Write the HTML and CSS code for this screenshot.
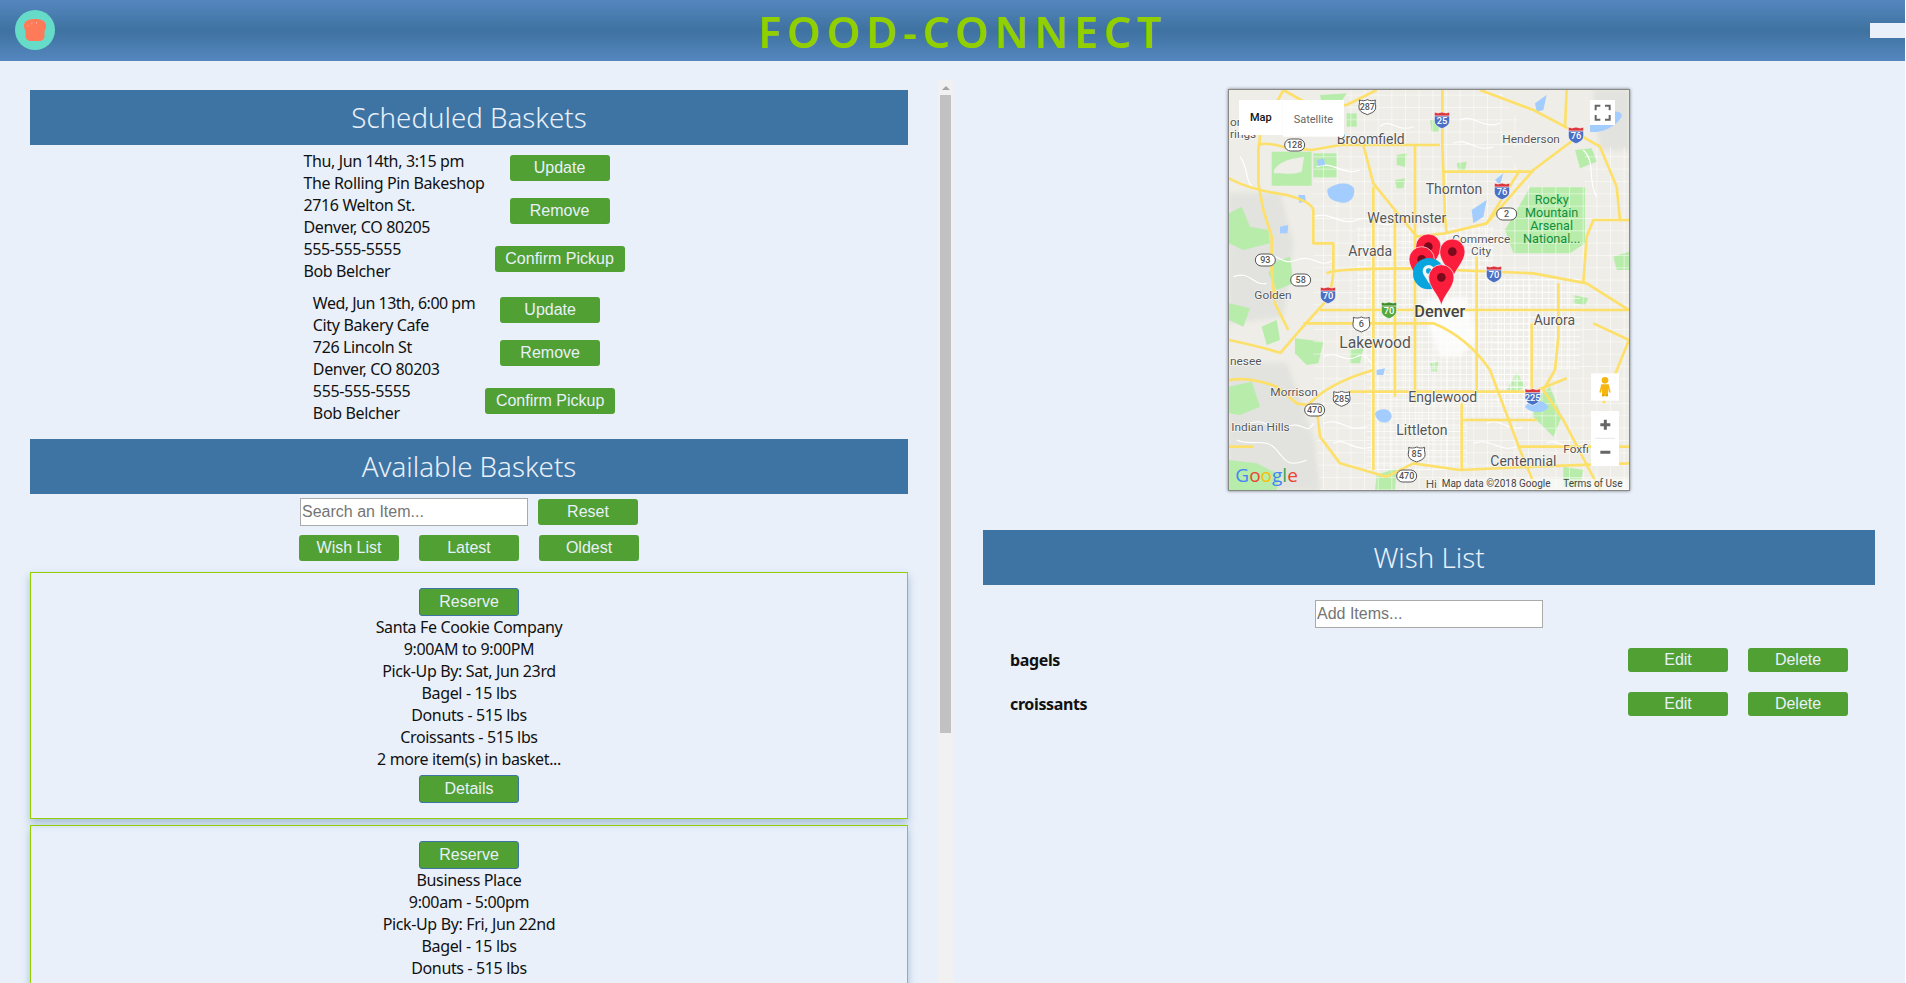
FILE: index.html
```html
<!DOCTYPE html>
<html lang="en">
<head>
<meta charset="utf-8">
<title>Food-Connect</title>
<link rel="stylesheet" href="styles.css">
</head>
<body>
<div class="page">
  <header class="topbar">
    <svg class="logo" viewBox="0 0 40 40" aria-label="logo">
      <circle cx="20" cy="20" r="20" fill="#66dcc8"/>
      <path d="M20 9C27 9 31 11 31 16C31 18.500 30 19.500 29.500 21L29.500 26C29.500 29.500 27 31 24 31L16 31C13 31 10.500 29.500 10.500 26L10.500 21C10 19.500 9 18.500 9 16C9 11 13 9 20 9Z" fill="#ff7a59"/>
      <path d="M13 15L12.700 16.500M17 12.500L16.800 14.500M21.500 12L21.500 14" stroke="#ffc9a8" stroke-width=".6" fill="none"/>
    </svg>
    <h1 class="brand">FOOD-CONNECT</h1>
    <div class="menu-stub"></div>
  </header>
  <main class="columns">
    <div class="pane-left">
      <section class="pane-content">
        <h2 class="bar">Scheduled Baskets</h2>
        <div class="entry">
          <div class="entry-info">
            <div>Thu, Jun 14th, 3:15 pm</div>
            <div>The Rolling Pin Bakeshop</div>
            <div>2716 Welton St.</div>
            <div>Denver, CO 80205</div>
            <div>555-555-5555</div>
            <div>Bob Belcher</div>
          </div>
          <div class="entry-actions">
            <button class="btn">Update</button>
            <button class="btn btn-remove">Remove</button>
            <button class="btn btn-confirm">Confirm Pickup</button>
          </div>
        </div>
        <div class="entry">
          <div class="entry-info">
            <div class="entry-date-tight">Wed, Jun 13th, 6:00 pm</div>
            <div>City Bakery Cafe</div>
            <div>726 Lincoln St</div>
            <div>Denver, CO 80203</div>
            <div>555-555-5555</div>
            <div>Bob Belcher</div>
          </div>
          <div class="entry-actions">
            <button class="btn">Update</button>
            <button class="btn btn-remove">Remove</button>
            <button class="btn btn-confirm">Confirm Pickup</button>
          </div>
        </div>
        <h2 class="bar bar-available">Available Baskets</h2>
        <div class="search-row">
          <input class="field" type="text" placeholder="Search an Item...">
          <button class="btn">Reset</button>
        </div>
        <div class="sort-row">
          <button class="btn">Wish List</button>
          <button class="btn">Latest</button>
          <button class="btn">Oldest</button>
        </div>
        <div class="cards">
          <article class="card">
            <button class="btn btn-outlined">Reserve</button>
            <div class="card-text">
              <div>Santa Fe Cookie Company</div>
              <div>9:00AM to 9:00PM</div>
              <div>Pick-Up By: Sat, Jun 23rd</div>
              <div>Bagel - 15 lbs</div>
              <div>Donuts - 515 lbs</div>
              <div>Croissants - 515 lbs</div>
              <div>2 more item(s) in basket...</div>
            </div>
            <button class="btn btn-outlined btn-details">Details</button>
          </article>
          <article class="card">
            <button class="btn btn-outlined">Reserve</button>
            <div class="card-text">
              <div>Business Place</div>
              <div>9:00am - 5:00pm</div>
              <div>Pick-Up By: Fri, Jun 22nd</div>
              <div>Bagel - 15 lbs</div>
              <div>Donuts - 515 lbs</div>
            </div>
          </article>
        </div>
      </section>
      <div class="scrollbar" aria-hidden="true">
        <div class="scroll-up"><span class="scroll-arrow"></span></div>
        <div class="scroll-thumb"></div>
      </div>
    </div>
    <section class="pane-right">
      <div class="map">
        <svg class="map-svg" viewBox="87 60 1200 1200" aria-label="Map of Denver">
          <defs>
            <pattern id="streets" width="19" height="19" patternUnits="userSpaceOnUse">
              <path d="M0 0H19M0 0V19" stroke="#fff" stroke-width="3.500" fill="none"/>
            </pattern>
            <pattern id="streets-wide" width="41" height="37" patternUnits="userSpaceOnUse">
              <path d="M0 0H41M0 0V37" stroke="#fff" stroke-width="3" fill="none"/>
            </pattern>
            <g id="pin">
              <path class="pin-edge" d="M0 84C-8 52-38 30-38 0A38 38 0 1 1 38 0C38 30 8 52 0 84Z"/>
              <circle class="pin-hole" r="13"/>
            </g>
            <g id="shield-i">
              <path class="sh-blue" d="M-23-18H23V2C23 16 10 22 0 26C-10 22-23 16-23 2Z"/>
              <path class="sh-red" d="M-23-24L-12-21L0-24L12-21L23-24V-12H-23Z"/>
            </g>
            <g id="shield-w">
              <path class="sh-white" d="M-24-20C-16-17-8-17 0-21C8-17 16-17 24-20C21-10 28-2 24 8C20 18 8 20 0 24C-8 20-20 18-24 8C-28-2-21-10-24-20Z"/>
            </g>
            <g id="shield-g">
              <path class="sh-green" d="M-23-16H23V2C23 16 10 22 0 26C-10 22-23 16-23 2Z"/>
              <path class="sh-green-top" d="M-23-24L-12-21L0-24L12-21L23-24V-12H-23Z"/>
            </g>
            <rect id="oval" class="sh-white" x="-30" y="-18" width="60" height="36" rx="18"/>
          </defs>

          <rect class="m-land" x="87" y="60" width="1200" height="1200"/>
          <path class="m-grey" d="M87 370H240L280 520L250 740L87 760Z"/>
          <path class="m-grey" d="M87 880H260L340 1100L360 1260H87Z"/>
          <path class="m-grey" d="M1180 60H1287V240H1200Z"/>

          <g class="m-park">
            <path d="M215 245H335V347H215Z"/>
            <path d="M340 250H410V322H340Z"/>
            <path d="M915 480L990 352H1155V520L1110 550H940Z"/>
            <path d="M87 430L125 410L150 470L205 480L210 520L130 540L87 520Z"/>
            <path d="M225 575L270 560L280 640L230 660L205 610Z"/>
            <path d="M87 700L150 715L130 770L87 750Z"/>
            <path d="M185 770L230 750L240 810L200 825Z"/>
            <path d="M285 805L370 815L355 880L320 885L285 850Z"/>
            <path d="M87 950L155 935L180 1010L120 1035L87 1030Z"/>
            <path d="M1000 990L1050 950L1085 1040L1060 1100L1000 1040Z"/>
            <path d="M440 130L470 130V170H440Z"/>
            <path d="M360 75L440 70L420 100L365 100Z"/>
            <path d="M87 1170L170 1180L240 1215L230 1260H87Z"/>
            <path d="M530 1215L590 1195L585 1260H525Z"/>
            <path d="M1125 240L1175 235L1190 275L1140 295Z"/>
            <path d="M1120 675L1165 685L1155 705L1120 700Z"/>
            <path d="M690 150L720 145L715 185L695 185Z"/>
            <path d="M585 330L615 325L610 355L590 355Z"/>
            <path d="M770 280L800 275L795 300L775 300Z"/>
            <path d="M690 880L715 875L710 905L695 905Z"/>
            <path d="M450 840L490 835L480 880L450 880Z"/>
            <path d="M920 960L950 905L975 950L950 965Z"/>
            <path d="M1240 560L1287 545V600L1250 600Z"/>
            <path d="M590 255L620 250L615 290L590 285Z"/>
            <path d="M1090 1190L1150 1200L1140 1250L1090 1250Z"/>
          </g>
          <path class="m-hole" d="M222 300C240 270 280 265 312 260L305 305C280 315 240 310 222 310Z"/>

          <path fill="url(#streets-wide)" d="M340 230H915L990 352H1155V230H1287V1260H360L340 900Z"/>
          <path fill="url(#streets-wide)" d="M440 60H900L1000 230H440Z"/>
          <path class="m-dense" fill="url(#streets)" d="M470 470H880V620H1140V900H1000V1040H800V1200H500V900L470 700Z"/>
          <path class="m-dense" fill="url(#streets)" d="M880 640H1000V1000H880Z"/>
          <path class="m-urban" d="M670 690L800 680L830 800L780 860L720 860L690 780Z"/>

          <g class="m-lane">
            <path d="M340 440C390 420 420 470 470 450S540 480 580 460"/>
            <path d="M350 290C400 270 430 320 480 300"/>
            <path d="M190 560C230 540 240 590 290 570S360 600 400 570"/>
            <path d="M100 620C150 600 160 650 200 640"/>
            <path d="M150 1060C200 1040 210 1090 260 1070S320 1100 340 1060"/>
            <path d="M110 1110C150 1130 200 1100 230 1140S270 1190 320 1170"/>
            <path d="M370 860C410 840 430 880 470 860S510 900 530 880"/>
            <path d="M370 1060C420 1040 440 1090 500 1070"/>
            <path d="M400 1120C440 1100 460 1150 520 1130"/>
            <path d="M860 1060C900 1040 930 1090 970 1070"/>
            <path d="M820 1120C870 1100 900 1150 950 1130"/>
            <path d="M1040 1120C1070 1100 1100 1150 1150 1120"/>
            <path d="M1150 240C1190 280 1160 330 1190 380"/>
            <path d="M780 150C820 130 850 180 900 160"/>
            <path d="M760 220C800 200 830 250 880 230"/>
            <path d="M540 170C570 140 590 190 640 170"/>
            <path d="M120 260C150 300 130 340 170 360"/>
          </g>

          <g class="m-water">
            <path d="M382 358C410 335 450 335 462 355C468 385 445 402 425 398C400 395 380 385 382 358Z"/>
            <path d="M975 1010C990 985 1030 985 1045 1010C1040 1030 990 1032 975 1010Z"/>
            <path d="M525 1030C540 1010 575 1015 575 1040C570 1065 530 1065 525 1030Z"/>
            <path d="M1170 140C1200 130 1270 110 1265 140C1240 180 1190 190 1170 185Z"/>
            <path d="M815 420L860 390L850 440L820 460Z"/>
            <path d="M885 330L910 310L900 345Z"/>
            <path d="M1005 100L1040 75L1030 120L1010 125Z"/>
            <path d="M350 270L372 265L375 285L355 288Z"/>
            <path d="M295 375L315 375L318 395L298 398Z"/>
            <path d="M240 470L265 465L262 490L240 490Z"/>
            <path d="M530 900L555 895L550 915L530 915Z"/>
          </g>

          <g class="m-road">
            <path d="M87 325Q150 360 260 375Q335 395 340 420V520H400V600"/>
            <path d="M175 340V240Q180 215 180 190L250 60"/>
            <path d="M175 340L190 420L215 500V600L225 700L265 780"/>
            <path d="M175 225Q200 215 255 232L335 240L420 225H720"/>
            <path d="M250 60L330 105H440L530 60"/>
            <path d="M727 60V225L735 440L740 490"/>
            <path d="M490 225L520 340L585 420L650 500L735 490"/>
            <path d="M520 350V1200"/>
            <path d="M585 420V980"/>
            <path d="M645 225V1000"/>
            <path d="M380 610Q400 595 640 595L1000 610L1160 640L1287 720"/>
            <path d="M360 720H1287"/>
            <path d="M310 760H700Q800 800 870 900L960 1140L1010 1260"/>
            <path d="M240 850L300 780L390 680L400 610"/>
            <path d="M87 810Q180 830 240 848"/>
            <path d="M87 930Q150 920 230 950L290 1000L350 1010L360 1100L420 1180L560 1220L640 1180L780 1200L1000 1190L1287 1180"/>
            <path d="M320 1010Q380 940 520 900"/>
            <path d="M450 965H1000L1100 925"/>
            <path d="M830 560V960"/>
            <path d="M995 760V960"/>
            <path d="M1075 640V800L1065 900L1030 960L1090 1050L1200 1260"/>
            <path d="M735 490L860 460L1000 300L1120 210"/>
            <path d="M1100 60L1095 170L1200 230L1250 350L1260 450H1180L1160 500L1150 640"/>
            <path d="M840 60L1000 120L1095 170"/>
            <path d="M730 305H1000"/>
            <path d="M785 1000V1200"/>
            <path d="M790 1050H1010"/>
            <path d="M960 1130H1287"/>
            <path d="M1210 1000L1287 810"/>
            <path d="M1180 760L1287 810"/>
            <path d="M860 460L960 300"/>
            <path d="M1260 450H1287"/>
            <path d="M87 1130H160"/>
          </g>

          <use href="#shield-w" x="502" y="110"/><text class="sh-t" x="502" y="120">287</text>
          <use href="#shield-i" x="726" y="150"/><text class="sh-t-w" x="726" y="163">25</text>
          <use href="#shield-i" x="1128" y="195"/><text class="sh-t-w" x="1128" y="208">76</text>
          <use href="#oval" x="284" y="225"/><text class="sh-t" x="284" y="235">128</text>
          <use href="#shield-i" x="906" y="363"/><text class="sh-t-w" x="906" y="376">76</text>
          <use href="#oval" x="920" y="432"/><text class="sh-t" x="920" y="442">2</text>
          <use href="#oval" x="196" y="570"/><text class="sh-t" x="196" y="580">93</text>
          <use href="#oval" x="302" y="630"/><text class="sh-t" x="302" y="640">58</text>
          <use href="#shield-i" x="384" y="675"/><text class="sh-t-w" x="384" y="688">70</text>
          <use href="#shield-i" x="882" y="612"/><text class="sh-t-w" x="882" y="625">70</text>
          <use href="#shield-g" x="567" y="720"/><text class="sh-t-w" x="567" y="733">70</text>
          <use href="#shield-w" x="484" y="762"/><text class="sh-t" x="484" y="772">6</text>
          <use href="#shield-w" x="425" y="985"/><text class="sh-t" x="425" y="995">285</text>
          <use href="#oval" x="344" y="1020"/><text class="sh-t" x="344" y="1030">470</text>
          <use href="#shield-i" x="998" y="980"/><text class="sh-t-w" x="998" y="992">225</text>
          <use href="#shield-w" x="650" y="1152"/><text class="sh-t" x="650" y="1162">85</text>
          <use href="#oval" x="620" y="1218"/><text class="sh-t" x="620" y="1228">470</text>

          <text class="lb lb-m" x="410" y="221">Broomfield</text>
          <text class="lb lb-s" x="907" y="219">Henderson</text>
          <text class="lb lb-m" x="677" y="372">Thornton</text>
          <text class="lb lb-m" x="502" y="458">Westminster</text>
          <text class="lb lb-m" x="445" y="558">Arvada</text>
          <text class="lb lb-s" x="757" y="519">Commerce</text>
          <text class="lb lb-s" x="813" y="555">City</text>
          <text class="lb-park" x="1055" y="403">Rocky</text>
          <text class="lb-park" x="1055" y="442">Mountain</text>
          <text class="lb-park" x="1055" y="481">Arsenal</text>
          <text class="lb-park" x="1055" y="520">National...</text>
          <text class="lb lb-s" x="163" y="687">Golden</text>
          <text class="lb lb-m" x="1001" y="765">Aurora</text>
          <text class="lb lb-l" x="418" y="835">Lakewood</text>
          <text class="lb lb-m" x="625" y="995">Englewood</text>
          <text class="lb lb-s" x="211" y="978">Morrison</text>
          <text class="lb lb-s" x="94" y="1083">Indian Hills</text>
          <text class="lb lb-m" x="589" y="1094">Littleton</text>
          <text class="lb lb-m" x="871" y="1187">Centennial</text>
          <text class="lb lb-s" x="1090" y="1150">Foxfi</text>
          <text class="lb lb-s" x="90" y="885">nesee</text>
          <text class="lb lb-s" x="90" y="204">rings</text>
          <text class="lb lb-s" x="90" y="168">ora</text>
          <text class="lb lb-s" x="677" y="1254">Hi</text>

          <use href="#pin" x="685" y="530"/>
          <use href="#pin" x="665" y="568"/>
          <use href="#pin" x="757" y="545"/>
          <circle class="blue-ring" cx="686" cy="611" r="47"/>
          <path class="blue-drop" d="M686 640C680 625 668 615 668 603A18 18 0 1 1 704 603C704 615 692 625 686 640Z"/>
          <circle class="blue-ring" cx="686" cy="603" r="8"/>
          <use href="#pin" x="724" y="622"/>
          <text class="lb-city" x="643" y="740">Denver</text>

          <rect class="ctl" x="117" y="90" width="131" height="105"/>
          <rect class="ctl" x="248" y="90" width="184" height="110"/>
          <text class="ctl-on" x="150" y="153">Map</text>
          <text class="ctl-off" x="281" y="158">Satellite</text>

          <rect class="ctl" x="1170" y="90" width="75" height="75"/>
          <path class="ctl-icon" d="M1187 121V107H1201M1215 107H1229V121M1229 135V149H1215M1201 149H1187V135"/>

          <rect class="ctl" x="1173" y="910" width="84" height="82"/>
          <circle class="peg" cx="1215" cy="931" r="10"/>
          <path class="peg" d="M1204 943H1226L1232 967L1227 968L1224 955V976H1206V955L1203 968L1198 967Z"/>
          <rect class="peg-leg" x="1206" y="974" width="8" height="5"/>
          <rect class="peg-leg" x="1216" y="974" width="8" height="5"/>

          <rect class="ctl" x="1173" y="1023" width="84" height="165"/>
          <path class="ctl-sep" d="M1185 1105H1245"/>
          <path class="ctl-zoom" d="M1201 1064H1231M1216 1049V1079M1201 1147H1231"/>

          <text class="g-logo" x="106" y="1237"><tspan class="g-b">G</tspan><tspan class="g-r">o</tspan><tspan class="g-y">o</tspan><tspan class="g-b">g</tspan><tspan class="g-g">l</tspan><tspan class="g-r">e</tspan></text>

          <rect class="attr-bg" x="718" y="1226" width="569" height="34"/>
          <text class="attr" x="725" y="1250">Map data ©2018 Google</text>
          <text class="attr" x="1090" y="1250">Terms of Use</text>
        </svg>
      </div>
      <h2 class="bar bar-wish">Wish List</h2>
      <div class="add-row">
        <input class="field" type="text" placeholder="Add Items...">
      </div>
      <ul class="wish-items">
        <li class="wish-item">
          <span class="wish-name">bagels</span>
          <button class="btn btn-edit">Edit</button>
          <button class="btn btn-edit">Delete</button>
        </li>
        <li class="wish-item">
          <span class="wish-name">croissants</span>
          <button class="btn btn-edit">Edit</button>
          <button class="btn btn-edit">Delete</button>
        </li>
      </ul>
    </section>
  </main>
</div>
</body>
</html>
```
FILE: styles.css
```css
* { box-sizing: border-box; }
html, body { margin: 0; height: 100%; background: #fff; }
body { overflow: hidden; font-family: "Noto Sans", sans-serif; font-size: 16px; letter-spacing: -.36px; color: #111; }

.page { width: 1905px; height: 983px; background: #e9f0fa; overflow: hidden; }

.topbar {
  height: 61px;
  display: flex;
  align-items: flex-start;
  justify-content: space-between;
  padding-left: 15px;
  background: linear-gradient(#5587bf 0%, #3e72a0 50%, #5587bf 100%);
}
.logo { width: 40px; height: 40px; margin-top: 10px; }
.brand {
  margin: 0;
  padding-top: 1px;
  font-size: 43px;
  font-weight: 600;
  line-height: 61px;
  letter-spacing: 5.700px;
  color: #91cf00;
}
.menu-stub { width: 35px; height: 15px; margin-top: 23px; background: #e9f0fa; }

.columns { display: flex; height: 903px; margin-top: 19px; }

.pane-left { flex: 0 0 953px; height: 903px; display: flex; }
.pane-content { width: 938px; height: 903px; padding: 10px 30px 0; overflow: hidden; }

.scrollbar { width: 15px; height: 903px; background: #f1f1f1; }
.scroll-up { height: 15px; display: flex; justify-content: center; padding-top: 6px; }
.scroll-arrow { width: 0; height: 0; border-left: 4px solid transparent; border-right: 4px solid transparent; border-bottom: 4px solid #a3a3a3; }
.scroll-thumb { width: 11px; height: 638px; margin: 0 2px; background: #c1c1c1; }

.pane-right { flex: 1; padding: 9px 30px 0; min-width: 0; }

.bar {
  margin: 0;
  height: 55px;
  background: #3e74a3;
  color: #e9f0fa;
  font-size: 27.700px;
  font-weight: 300;
  letter-spacing: 0;
  line-height: 55px;
  text-align: center;
}
.bar-available { margin-top: 10px; }
.bar-wish { margin-top: 39px; }

.btn {
  width: 100px;
  height: 26px;
  padding: 0;
  border: 0;
  border-radius: 3px;
  background: #50a034;
  color: #e9f0fa;
  font-family: "Liberation Sans", sans-serif;
  font-size: 16px;
  letter-spacing: 0;
  line-height: 26px;
}
.btn-remove { margin-top: 17px; }
.btn-confirm { width: 130px; margin-top: 22px; }
.btn-outlined { height: 28px; border: 1px solid #3e74a3; }
.btn-details { margin-top: 5px; }
.btn-edit { height: 24px; line-height: 24px; margin-left: 20px; }

.entry { display: flex; justify-content: center; padding: 5px 0; }
.entry-info { line-height: 22px; }
.entry-date-tight { letter-spacing: -.5px; }
.entry-actions {
  display: flex;
  flex-direction: column;
  align-items: center;
  margin: 0 10px;
  padding-top: 5px;
}

.field {
  width: 228px;
  height: 28px;
  padding: 0 1px;
  border: 1px solid #aaa;
  background: #fff;
  font-family: "Liberation Sans", sans-serif;
  font-size: 16px;
  letter-spacing: 0;
}
.field::placeholder { color: #757575; }

.search-row { display: flex; justify-content: center; align-items: center; gap: 10px; margin-top: 4px; }
.sort-row { display: flex; justify-content: center; gap: 20px; margin-top: 9px; }

.cards { display: flex; flex-direction: column; gap: 6px; margin-top: 11px; }
.card {
  display: flex;
  flex-direction: column;
  align-items: center;
  padding: 15px;
  border: 1px solid #91cf00;
  box-shadow: 0 4px 8px rgba(62, 116, 163, .4);
}
.card-text { line-height: 22px; text-align: center; }

.map {
  width: 402px;
  height: 402px;
  margin: 0 auto;
  border: 1px solid #8a8a8a;
  box-shadow: 0 0 3px rgba(0, 0, 0, .5);
}
.map-svg { display: block; width: 400px; height: 400px; font-family: Roboto, sans-serif; letter-spacing: 0; }

.add-row { display: flex; justify-content: center; margin-top: 15px; }
.wish-items { list-style: none; margin: 20px 0 0; padding: 0 27px; display: flex; flex-direction: column; gap: 20px; }
.wish-item { display: flex; align-items: center; height: 24px; }
.wish-name { flex: 1; font-weight: 700; }

/* map drawing */
.m-land { fill: #eeede7; }
.m-grey { fill: #e2e2de; filter: blur(6px); }
.m-park path { fill: #b8ecaa; }
.m-hole { fill: #eeede7; }
.m-urban { fill: #fff; opacity: .8; filter: blur(8px); }
.m-lane path { fill: none; stroke: #fff; stroke-width: 3.500; }
.m-water path { fill: #a3ccff; }
.m-road path { fill: none; stroke: #fde06a; stroke-width: 8; stroke-linejoin: round; }
.sh-blue { fill: #4a6fc4; stroke: #fff; stroke-width: 2; }
.sh-red { fill: #d9363e; stroke: #fff; stroke-width: 2; }
.sh-green { fill: #54a83e; stroke: #fff; stroke-width: 2; }
.sh-green-top { fill: #3f8c2b; stroke: #fff; stroke-width: 2; }
.sh-white { fill: #fff; stroke: #555; stroke-width: 3; }
.sh-t { fill: #555; font-size: 27px; text-anchor: middle; font-weight: 500; }
.sh-t-w { fill: #fff; font-size: 28px; text-anchor: middle; font-weight: 500; }
.lb { fill: #555; stroke: #fff; stroke-width: 3; paint-order: stroke; }
.lb-s { font-size: 35.500px; }
.lb-m { font-size: 42px; }
.lb-l { font-size: 47px; }
.lb-park { fill: #0f8f3e; font-size: 38px; text-anchor: middle; }
.lb-city { fill: #444; font-size: 49px; font-weight: 500; stroke: #fff; stroke-width: 3; paint-order: stroke; }
.pin-edge { fill: #fa1e3c; stroke: #fff; stroke-width: 2; }
.pin-hole { fill: #7b0a1c; }
.blue-ring { fill: #07a4dd; }
.blue-drop { fill: #eef4f8; }
.ctl { fill: #fff; }
.ctl-on { fill: #111; font-size: 33px; font-weight: 500; }
.ctl-off { fill: #666; font-size: 33px; }
.ctl-icon { fill: none; stroke: #666; stroke-width: 6; }
.ctl-sep { stroke: #e6e6e6; stroke-width: 3; }
.ctl-zoom { stroke: #666; stroke-width: 9; fill: none; }
.peg { fill: #f5b60f; }
.peg-leg { fill: #e0a000; }
.g-logo { font-family: "Open Sans", sans-serif; font-size: 57px; font-weight: 500; }
.g-b { fill: #4285f4; }
.g-r { fill: #ea4335; }
.g-y { fill: #fbbc05; }
.g-g { fill: #34a853; }
.attr-bg { fill: #fff; opacity: .55; }
.attr { fill: #444; font-size: 30px; }
```
